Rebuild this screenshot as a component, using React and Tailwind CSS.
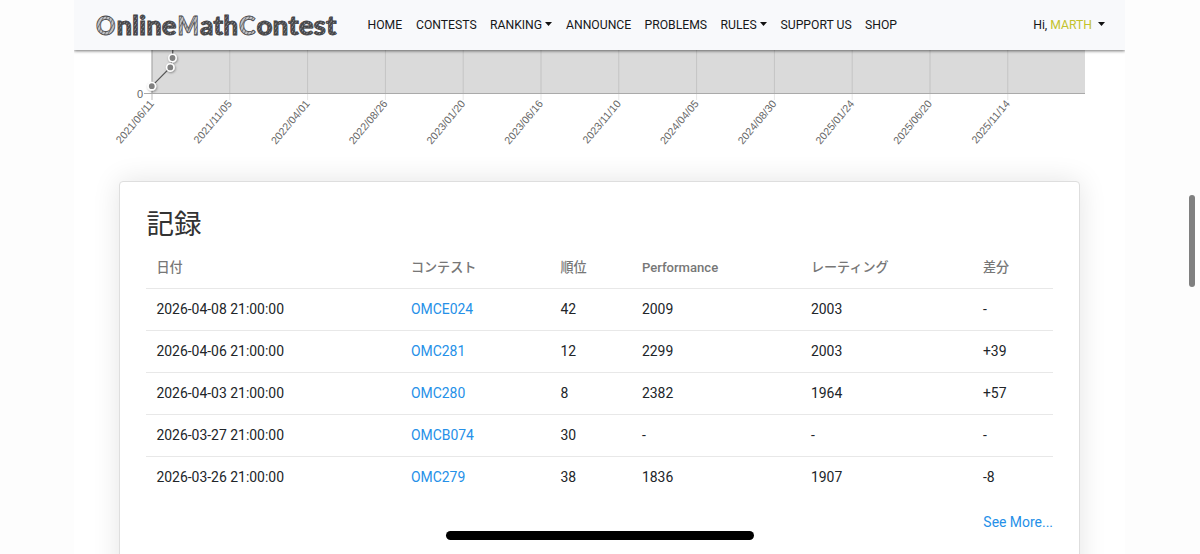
import React from "react";

const NAV = [
  { label: "HOME", width: "w-[48.5px]" },
  { label: "CONTESTS", width: "w-[74px]" },
  { label: "RANKING", width: "w-[76px]", menu: true },
  { label: "ANNOUNCE", width: "w-[78.5px]" },
  { label: "PROBLEMS", width: "w-[76px]" },
  { label: "RULES", width: "w-[60px]", menu: true },
  { label: "SUPPORT US", width: "w-[84.5px]" },
  { label: "SHOP", width: "w-[40px]" },
];

const DATES = [
  "2021/06/11", "2021/11/05", "2022/04/01", "2022/08/26",
  "2023/01/20", "2023/06/16", "2023/11/10", "2024/04/05",
  "2024/08/30", "2025/01/24", "2025/06/20", "2025/11/14",
];

const ROWS = [
  ["2026-04-08 21:00:00", "OMCE024", "42", "2009", "2003", "-"],
  ["2026-04-06 21:00:00", "OMC281", "12", "2299", "2003", "+39"],
  ["2026-04-03 21:00:00", "OMC280", "8", "2382", "1964", "+57"],
  ["2026-03-27 21:00:00", "OMCB074", "30", "-", "-", "-"],
  ["2026-03-26 21:00:00", "OMC279", "38", "1836", "1907", "-8"],
];

const COLUMNS = "grid grid-cols-[254.5px_149.5px_81.5px_169px_172px_1fr] items-center pl-[10px]";

function Caret() {
  return (
    <svg className="mb-[2px] h-[4px] w-[7px]" viewBox="0 0 7 4" fill="#111">
      <path d="M0 0H7L3.5 4Z" />
    </svg>
  );
}

function Logo() {
  return (
    <svg
      className="h-[50px] w-[246px] shrink-0"
      viewBox="0 0 246 50"
      fontFamily="Lato, 'Noto Sans', sans-serif"
      fontWeight="900"
      fontSize="27"
      stroke="#3f4042"
      strokeWidth="0.8"
    >
      <defs>
        <pattern id="light" width="3" height="3" patternUnits="userSpaceOnUse" patternTransform="rotate(28)">
          <rect width="3" height="3" fill="#c4c5c8" stroke="none" />
          <rect width="1.1" height="3" fill="#77787b" stroke="none" />
        </pattern>
        <pattern id="dark" width="2.6" height="3.4" patternUnits="userSpaceOnUse" patternTransform="rotate(35)">
          <rect width="2.6" height="3.4" fill="#48494c" stroke="none" />
          <rect width="0.6" height="2.2" fill="#b4b5b8" stroke="none" />
        </pattern>
      </defs>
      <text y="35">
        <tspan x="1" fill="url(#light)" textLength="19.5" lengthAdjust="spacingAndGlyphs">O</tspan>
        <tspan x="21.5" fill="url(#dark)" textLength="60" lengthAdjust="spacingAndGlyphs">nline</tspan>
        <tspan x="82.5" fill="url(#light)" textLength="21.5" lengthAdjust="spacingAndGlyphs">M</tspan>
        <tspan x="105" fill="url(#dark)" textLength="38" lengthAdjust="spacingAndGlyphs">ath</tspan>
        <tspan x="144" fill="url(#light)" textLength="16.5" lengthAdjust="spacingAndGlyphs">C</tspan>
        <tspan x="161.5" fill="url(#dark)" textLength="80" lengthAdjust="spacingAndGlyphs">ontest</tspan>
      </text>
    </svg>
  );
}

function Header() {
  return (
    <header className="relative z-10 flex h-[50px] shrink-0 items-center bg-[#f8f9fb] pl-[21px] text-[12.2px] text-[#161719] shadow-[0_1px_3px_rgba(0,0,0,0.55)]">
      <Logo />
      <nav className="ml-[26.5px] flex pt-px">
        {NAV.map((item) => (
          <a key={item.label} className={`flex items-center gap-[3px] whitespace-nowrap ${item.width}`}>
            {item.label}
            {item.menu && <Caret />}
          </a>
        ))}
      </nav>
      <div className="mr-[20px] ml-auto flex items-center pt-px">
        <span>
          Hi, <span className="text-[#c3c22d]">MARTH</span>
        </span>
        <span className="ml-[6px] flex">
          <Caret />
        </span>
      </div>
    </header>
  );
}

function RatingChart() {
  return (
    <svg className="block h-[131px] w-[1051px] shrink-0" viewBox="74 50 1051 131">
      <defs>
        <filter id="dotShadow" x="-50%" y="-50%" width="200%" height="200%">
          <feDropShadow dx="0.7" dy="1" stdDeviation="1" floodOpacity="0.4" />
        </filter>
      </defs>
      <rect x="151.5" y="50" width="933.5" height="43.5" fill="#dadada" />
      {DATES.map((date, i) => {
        const x = 152 + i * 77.8;
        return (
          <g key={date}>
            <line x1={x} x2={x} y1="50" y2="100" stroke="#000" strokeOpacity={i ? 0.1 : 0.28} />
            <text
              transform={`translate(${x + 2.7} 104) rotate(-50)`}
              textAnchor="end"
              fontFamily="'Liberation Sans', sans-serif"
              fontSize="10.7"
              fill="#666"
            >
              {date}
            </text>
          </g>
        );
      })}
      <line x1="144" x2="1085" y1="93.5" y2="93.5" stroke="#aaa" />
      <text x="143" y="97.5" textAnchor="end" fontFamily="'Liberation Sans', sans-serif" fontSize="11" fill="#666">
        0
      </text>
      <path d="M151.8 86.2 L170.3 67.4 L172.5 58 L172.8 50" fill="none" stroke="#555" strokeWidth="1.2" />
      <g fill="#808080" stroke="#fff" strokeWidth="1.6" filter="url(#dotShadow)">
        <circle cx="151.8" cy="86.2" r="3.7" />
        <circle cx="170.3" cy="67.4" r="3.7" />
        <circle cx="172.5" cy="58" r="3.7" />
      </g>
    </svg>
  );
}

function RecordCard() {
  return (
    <section className="mx-[45px] mr-[45px] ml-[45.4px] h-[420px] shrink-0 rounded-[4px] border border-[#dedede] bg-white px-[26px] pt-[23px] shadow-[0_0_28px_rgba(0,0,0,0.11)]">
      <h2 className="h-[40px] text-[27.5px] leading-[40px] text-[#333]">記録</h2>
      <div className="text-[13.95px]">
        <div className={`${COLUMNS} h-[44px] border-b border-[#e8e8e8] pt-[2px] text-[13.1px] font-medium text-[#777]`}>
          <span>日付</span>
          <span>コンテスト</span>
          <span>順位</span>
          <span>Performance</span>
          <span>レーティング</span>
          <span>差分</span>
        </div>
        {ROWS.map((row, r) => (
          <div
            key={row[0]}
            className={`${COLUMNS} h-[42px] border-b text-[#212529] ${r < ROWS.length - 1 ? "border-[#e8e8e8]" : "border-transparent"}`}
          >
            {row.map((cell, c) => (
              <span key={c} className={c === 1 ? "text-[#2590e8]" : ""}>
                {cell}
              </span>
            ))}
          </div>
        ))}
      </div>
      <div className="mt-[12px] text-right text-[13.95px] leading-[22px] text-[#2590e8]">See More...</div>
    </section>
  );
}

export default function App() {
  return (
    <div className="relative h-[554px] w-[1200px] overflow-hidden bg-[#fdfdfd] font-['Roboto','Noto_Sans_CJK_JP',sans-serif]">
      <main className="ml-[74px] flex h-full w-[1051px] flex-col overflow-hidden bg-white">
        <Header />
        <RatingChart />
        <RecordCard />
      </main>
      <div className="absolute top-[195px] left-[1189px] h-[92px] w-[6px] rounded-full bg-[#808080]" />
      <div className="absolute top-[531px] left-[446px] h-[9px] w-[308px] rounded-full bg-black" />
    </div>
  );
}
